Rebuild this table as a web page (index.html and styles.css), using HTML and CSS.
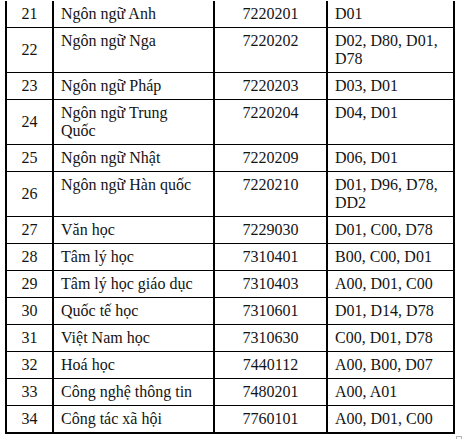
FILE: index.html
```html
<!DOCTYPE html>
<html lang="vi">
<head>
<meta charset="utf-8">
<title>Danh sách ngành</title>
<link rel="stylesheet" href="styles.css">
</head>
<body>
<div class="sheet">
<table class="majors">
  <colgroup>
    <col class="c-no">
    <col class="c-name">
    <col class="c-code">
    <col class="c-combo">
  </colgroup>
  <tbody>
    <tr><td class="no">21</td><td class="name">Ngôn ngữ Anh</td><td class="code">7220201</td><td class="combo">D01</td></tr>
    <tr><td class="no">22</td><td class="name">Ngôn ngữ Nga</td><td class="code">7220202</td><td class="combo">D02, D80, D01, D78</td></tr>
    <tr><td class="no">23</td><td class="name">Ngôn ngữ Pháp</td><td class="code">7220203</td><td class="combo">D03, D01</td></tr>
    <tr><td class="no">24</td><td class="name">Ngôn ngữ Trung Quốc</td><td class="code">7220204</td><td class="combo">D04, D01</td></tr>
    <tr><td class="no">25</td><td class="name">Ngôn ngữ Nhật</td><td class="code">7220209</td><td class="combo">D06, D01</td></tr>
    <tr><td class="no">26</td><td class="name">Ngôn ngữ Hàn quốc</td><td class="code">7220210</td><td class="combo">D01, D96, D78, DD2</td></tr>
    <tr><td class="no">27</td><td class="name">Văn học</td><td class="code">7229030</td><td class="combo">D01, C00, D78</td></tr>
    <tr><td class="no">28</td><td class="name">Tâm lý học</td><td class="code">7310401</td><td class="combo">B00, C00, D01</td></tr>
    <tr><td class="no">29</td><td class="name">Tâm lý học giáo dục</td><td class="code">7310403</td><td class="combo">A00, D01, C00</td></tr>
    <tr><td class="no">30</td><td class="name">Quốc tế học</td><td class="code">7310601</td><td class="combo">D01, D14, D78</td></tr>
    <tr><td class="no">31</td><td class="name">Việt Nam học</td><td class="code">7310630</td><td class="combo">C00, D01, D78</td></tr>
    <tr><td class="no">32</td><td class="name">Hoá học</td><td class="code">7440112</td><td class="combo">A00, B00, D07</td></tr>
    <tr><td class="no">33</td><td class="name">Công nghệ thông tin</td><td class="code">7480201</td><td class="combo">A00, A01</td></tr>
    <tr class="last"><td class="no">34</td><td class="name">Công tác xã hội</td><td class="code">7760101</td><td class="combo">A00, D01, C00</td></tr>
  </tbody>
</table>
<span class="handle"></span>
</div>
</body>
</html>
```

FILE: styles.css
```css
html, body {
  margin: 0;
  padding: 0;
  background: #ffffff;
}

body {
  font-family: "Liberation Serif", "Times New Roman", serif;
  font-size: 16px;
  line-height: 18px;
  color: #141414;
}

.sheet {
  position: relative;
  padding: 1px 0 0 5px;
  width: 458px;
  height: 438px;
  overflow: hidden;
}

.majors {
  border-collapse: separate;
  border-spacing: 0;
  table-layout: fixed;
  width: 450px;
}

.c-no { width: 49px; }
.c-name { width: 161px; }
.c-code { width: 113px; }
.c-combo { width: 127px; }

.majors td {
  box-sizing: border-box;
  padding: 4px 7px;
  border-right: 2px solid #000;
  border-bottom: 1px solid #000;
  vertical-align: top;
}

.majors td.no {
  border-left: 2px solid #000;
  text-align: center;
  vertical-align: middle;
  padding: 4px 2px;
}

.majors td.name {
  padding-right: 12px;
}

.majors td.code {
  text-align: center;
}

.majors tr.last td {
  border-bottom-width: 2px;
}

.handle {
  position: absolute;
  left: 456px;
  top: 436px;
  width: 4px;
  height: 4px;
  border: 1px solid #b4b4b4;
  background: #fff;
}
```
